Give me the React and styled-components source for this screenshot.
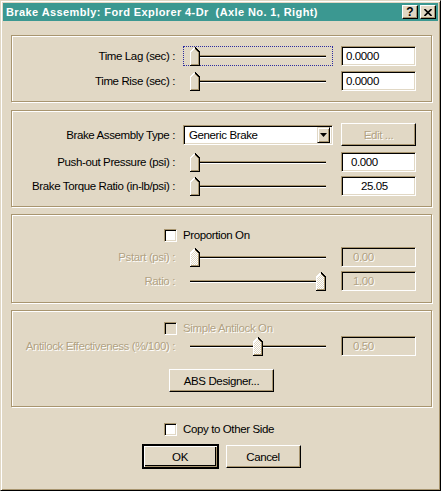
import React from 'react'
import styled, { createGlobalStyle, css } from 'styled-components'

const face = '#e1d8c5'
const shadow = '#a8956f'
const hilite = '#ffffff'
const dim = '#b1a283'

const GlobalStyle = createGlobalStyle`
	body {
		margin: 0;
		background: ${face};
		font-family: "Liberation Sans", Arial, sans-serif;
		font-size: 11.5px;
		letter-spacing: -0.38px;
		color: #000;
	}
`;

const Window = styled.div`
	width: 441px;
	height: 491px;
	box-sizing: border-box;
	background: ${face};
	border: 1px solid;
	border-color: ${face} #000 #000 ${face};
	box-shadow: inset 1px 1px 0 ${hilite}, inset -1px -1px 0 ${shadow};
	padding: 2px;
	display: flex;
	flex-direction: column;
`;

const TitleBar = styled.div`
	height: 18px;
	background: #3b9891;
	display: flex;
	align-items: center;
	padding: 0 2px 0 3px;
	color: #fff;
	font-weight: bold;
	font-size: 11px;
	letter-spacing: 0.4px;
	white-space: pre;
`;

const TitleText = styled.span`
	flex: 1;
`;

const TitleButton = styled.div`
	width: 16px;
	height: 14px;
	box-sizing: border-box;
	background: ${face};
	border: 1px solid;
	border-color: ${hilite} #000 #000 ${hilite};
	box-shadow: inset -1px -1px 0 ${shadow};
	margin-left: ${p => p.$ml || 0}px;
	display: flex;
	align-items: center;
	justify-content: center;
	color: #000;
	font-weight: bold;
	font-size: 12px;
	line-height: 1;
	letter-spacing: 0;
`;

const Content = styled.div`
	padding: 14px 6px 0 8px;
	display: flex;
	flex-direction: column;
`;

const GroupBox = styled.div`
	border: 1px solid ${shadow};
	box-shadow: 1px 1px 0 ${hilite}, inset 1px 1px 0 ${hilite};
	margin-top: ${p => p.$mt || 0}px;
	padding: ${p => p.$pt}px 0 ${p => p.$pb}px 0;
	display: flex;
	flex-direction: column;
`;

const Row = styled.div`
	display: grid;
	grid-template-columns: 163px 150px 75px;
	column-gap: 8px;
	align-items: center;
	height: ${p => p.$h || 20}px;
	margin-top: ${p => p.$mt || 0}px;
`;

const disabledText = css`
	color: ${dim};
	text-shadow: 1px 1px 0 ${hilite};
`;

const Label = styled.div`
	text-align: right;
	white-space: nowrap;
	${p => p.$off && disabledText}
`;

const sunken = css`
	box-sizing: border-box;
	border: 1px solid;
	border-color: ${shadow} ${hilite} ${hilite} ${shadow};
	box-shadow: inset 1px 1px 0 #000, inset -1px -1px 0 ${face};
`;

const TextBox = styled.div`
	${sunken}
	width: 75px;
	height: 20px;
	background: ${p => (p.$off ? face : '#fff')};
	display: flex;
	align-items: center;
	padding-left: ${p => p.$indent}px;
	${p => p.$off && disabledText}
`;

const SliderWrap = styled.div`
	position: relative;
	width: 150px;
	height: 20px;
	box-sizing: border-box;
	border: 1px dotted ${p => (p.$focus ? '#2c2ca0' : 'transparent')};
`;

const Track = styled.div`
	position: absolute;
	left: 6px;
	top: 8px;
	width: 136px;
	height: 1px;
	background: #000;
	border-top: 1px solid ${shadow};
	border-bottom: 1px solid ${hilite};
`;

const ThumbSvg = styled.svg`
	position: absolute;
	top: 0;
	display: block;
`;

const Combo = styled.div`
	${sunken}
	width: 150px;
	height: 20px;
	background: #fff;
	display: flex;
	align-items: center;
	padding: 0 2px 0 5px;
`;

const ComboText = styled.span`
	flex: 1;
`;

const DropButton = styled.div`
	width: 13px;
	height: 16px;
	box-sizing: border-box;
	background: ${face};
	border: 1px solid;
	border-color: ${face} #000 #000 ${face};
	box-shadow: inset 1px 1px 0 ${hilite}, inset -1px -1px 0 ${shadow};
	display: flex;
	align-items: center;
	justify-content: center;
`;

const Button = styled.div`
	width: ${p => p.$w || 75}px;
	height: ${p => p.$h || 23}px;
	box-sizing: border-box;
	background: ${face};
	border: 1px solid;
	border-color: ${hilite} #000 #000 ${hilite};
	box-shadow: inset -1px -1px 0 ${shadow};
	display: flex;
	align-items: center;
	justify-content: center;
	${p => p.$default && css`
		outline: 1px solid #000;
		border-color: #000;
		box-shadow: inset 1px 1px 0 ${hilite}, inset -1px -1px 0 ${shadow}, inset -2px -2px 0 #000;
	`}
	${p => p.$off && disabledText}
`;

const CheckRow = styled.div`
	display: flex;
	align-items: center;
	height: 14px;
	padding-left: ${p => p.$pl}px;
	margin-top: ${p => p.$mt || 0}px;
	gap: 6px;
	${p => p.$off && disabledText}
`;

const CheckBox = styled.div`
	${sunken}
	width: 13px;
	height: 13px;
	background: ${p => (p.$off ? face : '#fff')};
`;

const CenterRow = styled.div`
	display: flex;
	justify-content: center;
	gap: ${p => p.$gap || 0}px;
	margin-top: ${p => p.$mt || 0}px;
`;

function Thumb({ pos, off }) {
	const left = 6 + Math.round(pos * 126)
	return (
		<ThumbSvg width="10" height="19" viewBox="0 0 10 19" style={{ left }} shapeRendering="crispEdges">
			<defs>
				<pattern id="dither" width="2" height="2" patternUnits="userSpaceOnUse">
					<rect width="2" height="2" fill={face} />
					<rect width="1" height="1" fill="#fff" />
					<rect x="1" y="1" width="1" height="1" fill="#fff" />
				</pattern>
			</defs>
			<polygon points="0,5 5,0 10,5 10,19 0,19" fill={off ? 'url(#dither)' : face} />
			<path d="M0.5 18 V5 L4.5 1" stroke={hilite} fill="none" />
			<path d="M5 0.5 L9.5 5 V18.5 H0" stroke="#000" fill="none" />
			<path d="M5 1.8 L8.5 5.3 V17.5 H1" stroke={shadow} fill="none" />
		</ThumbSvg>
	)
}

function Slider({ pos = 0, off, focus }) {
	return (
		<SliderWrap $focus={focus}>
			<Track />
			<Thumb pos={pos} off={off} />
		</SliderWrap>
	)
}

function SliderRow({ label, value, indent, pos, off, focus, mt }) {
	return (
		<Row $mt={mt}>
			<Label $off={off}>{label}</Label>
			<Slider pos={pos} off={off} focus={focus} />
			<TextBox $off={off} $indent={indent}>{value}</TextBox>
		</Row>
	)
}

export default function App() {
	return (
		<>
			<GlobalStyle />
			<Window>
				<TitleBar>
					<TitleText>Brake Assembly: Ford Explorer 4-Dr  (Axle No. 1, Right)</TitleText>
					<TitleButton>?</TitleButton>
					<TitleButton $ml={2}>
						<svg width="8" height="7" viewBox="0 0 8 7">
							<path d="M0.5 0 L7.5 7 M7.5 0 L0.5 7" stroke="#000" strokeWidth="1.6" />
						</svg>
					</TitleButton>
				</TitleBar>
				<Content>
					<GroupBox $pt={10} $pb={10}>
						<SliderRow label="Time Lag (sec) :" value="0.0000" indent={4} focus />
						<SliderRow label="Time Rise (sec) :" value="0.0000" indent={4} mt={5} />
					</GroupBox>

					<GroupBox $mt={8} $pt={12} $pb={10}>
						<Row $h={22}>
							<Label>Brake Assembly Type :</Label>
							<Combo>
								<ComboText>Generic Brake</ComboText>
								<DropButton>
									<svg width="7" height="4" viewBox="0 0 7 4">
										<path d="M0 0 H7 L3.5 4 Z" fill="#000" />
									</svg>
								</DropButton>
							</Combo>
							<Button $off>Edit ...</Button>
						</Row>
						<SliderRow label="Push-out Pressure (psi) :" value="0.000" indent={9} mt={7} />
						<SliderRow label="Brake Torque Ratio (in-lb/psi) :" value="25.05" indent={19} mt={4} />
					</GroupBox>

					<GroupBox $mt={7} $pt={13} $pb={11}>
						<CheckRow $pl={152}>
							<CheckBox />
							<span>Proportion On</span>
						</CheckRow>
						<SliderRow label="Pstart (psi) :" value="0.00" indent={11} off mt={5} />
						<SliderRow label="Ratio :" value="1.00" indent={11} pos={1} off mt={4} />
					</GroupBox>

					<GroupBox $mt={7} $pt={10} $pb={14}>
						<CheckRow $pl={152} $off>
							<CheckBox $off />
							<span>Simple Antilock On</span>
						</CheckRow>
						<SliderRow label="Antilock Effectiveness (%/100) :" value="0.50" indent={11} pos={0.5} off mt={1} />
						<CenterRow $mt={13}>
							<Button $w={105}>ABS Designer...</Button>
						</CenterRow>
					</GroupBox>

					<CheckRow $pl={153} $mt={15}>
						<CheckBox />
						<span>Copy to Other Side</span>
					</CheckRow>
					<CenterRow $mt={9} $gap={8}>
						<Button $default>OK</Button>
						<Button>Cancel</Button>
					</CenterRow>
				</Content>
			</Window>
		</>
	)
}
